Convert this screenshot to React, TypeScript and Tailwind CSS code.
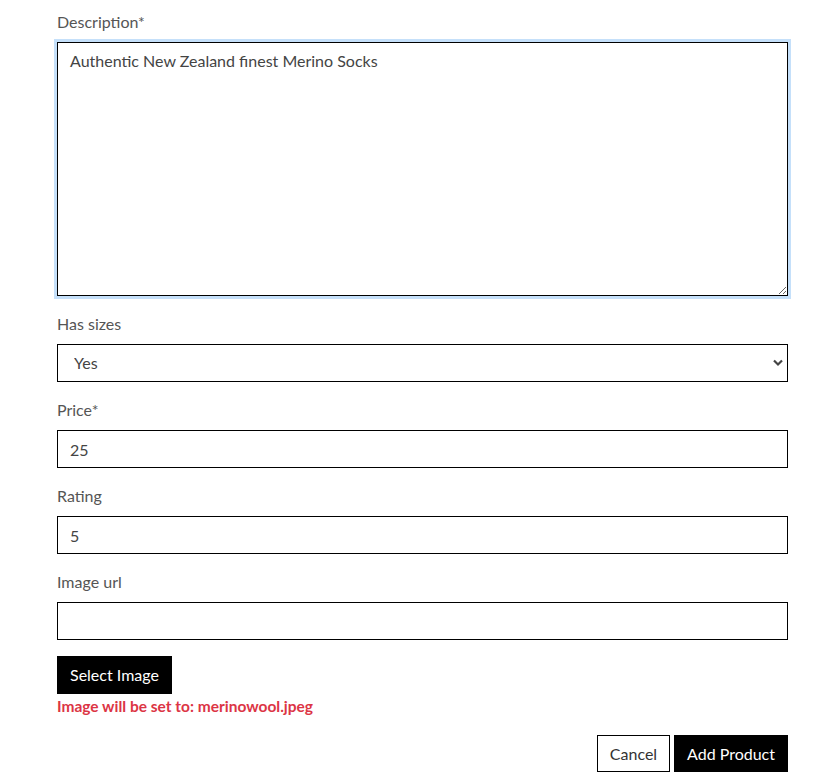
import { useState } from "react"

function Field({ label, children }: { label: string; children: React.ReactNode }) {
  return (
    <div className="mb-4 flex flex-col">
      <label className="mb-2 text-base leading-6 text-[#555]">{label}</label>
      {children}
    </div>
  )
}

export default function App() {
  const [desc, setDesc] = useState("Authentic New Zealand finest Merino Socks")
  const [sizes, setSizes] = useState("Yes")
  const [price, setPrice] = useState("25")
  const [rating, setRating] = useState("5")
  const [url, setUrl] = useState("")

  const input =
    "h-[38px] w-full border border-black bg-white px-[12px] text-base text-[#444] outline-none"

  return (
    <div className="min-h-screen bg-white font-['Lato','Liberation_Sans',sans-serif]">
      <form className="ml-[57px] w-[731px] pt-[10px]" onSubmit={(e) => e.preventDefault()}>
        <Field label="Description*">
          <textarea
            value={desc}
            onChange={(e) => setDesc(e.target.value)}
            className="h-[254px] w-full resize border border-black bg-white px-[12px] py-[6px] text-base leading-6 text-[#444] shadow-[0_0_0_3px_#c5e0fa] outline-none"
          />
        </Field>

        <Field label="Has sizes">
          <div className="relative">
            <select
              value={sizes}
              onChange={(e) => setSizes(e.target.value)}
              className={input + " appearance-none pl-[16px]"}
            >
              <option>Yes</option>
              <option>No</option>
            </select>
            <svg
              className="pointer-events-none absolute right-[5px] top-[15px]"
              width="10"
              height="8"
              viewBox="0 0 10 8"
            >
              <path d="M1 1.5 L5 5.5 L9 1.5" fill="none" stroke="#444" strokeWidth="2.2" />
            </svg>
          </div>
        </Field>

        <Field label="Price*">
          <input value={price} onChange={(e) => setPrice(e.target.value)} className={input} />
        </Field>

        <Field label="Rating">
          <input value={rating} onChange={(e) => setRating(e.target.value)} className={input} />
        </Field>

        <Field label="Image url">
          <input value={url} onChange={(e) => setUrl(e.target.value)} className={input} />
        </Field>

        <button type="button" className="h-[38px] bg-black px-[13px] text-base text-white">
          Select Image
        </button>
        <p className="text-[15.5px] font-bold leading-6 text-[#dc3545]">
          Image will be set to: merinowool.jpeg
        </p>

        <div className="mt-[17px] flex justify-end gap-[4px]">
          <button
            type="button"
            className="h-[37px] w-[73px] border border-black bg-white text-base text-[#333]"
          >
            Cancel
          </button>
          <button type="submit" className="h-[37px] w-[114px] bg-black text-base text-white">
            Add Product
          </button>
        </div>
      </form>
    </div>
  )
}
